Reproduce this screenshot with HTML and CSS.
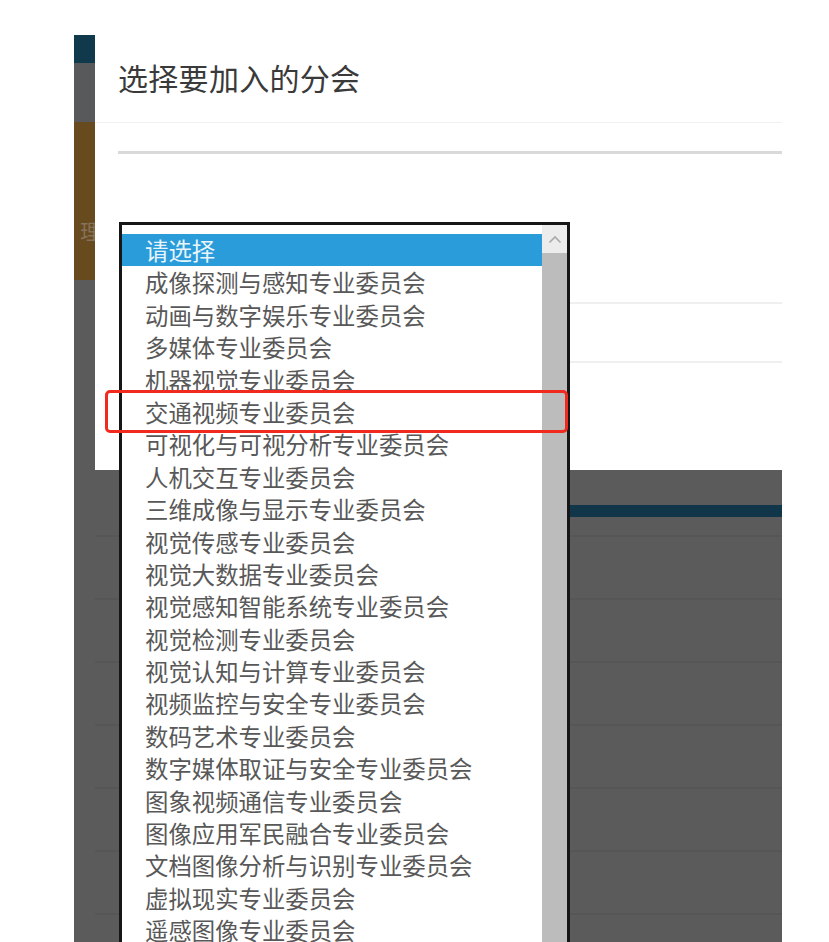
FILE: index.html
```html
<!DOCTYPE html>
<html lang="zh-CN">
<head>
<meta charset="utf-8">
<title>选择要加入的分会</title>
<link rel="stylesheet" href="styles.css">
</head>
<body>
<div class="screen">
 <div class="side">
  <div class="side_top"></div>
  <div class="side_gray"></div>
  <div class="side_brown"><span>理</span></div>
 </div>

 <div class="page">
  <div class="modal">
   <div class="modal_head"><h2>选择要加入的分会</h2></div>
   <div class="modal_body">
    <div class="rule"></div>
    <div class="field_line first"></div>
    <div class="field_line"></div>
   </div>
  </div>
  <div class="backdrop">
   <div class="bar"></div>
   <div class="rows">
    <div class="row"></div>
    <div class="row"></div>
    <div class="row"></div>
    <div class="row"></div>
    <div class="row"></div>
    <div class="row"></div>
    <div class="row"></div>
   </div>
  </div>
 </div>

 <!-- dropdown list, open over the dialog -->
 <div class="listbox">
  <ul class="options">
   <li class="selected">请选择</li>
   <li>成像探测与感知专业委员会</li>
   <li>动画与数字娱乐专业委员会</li>
   <li>多媒体专业委员会</li>
   <li>机器视觉专业委员会</li>
   <li>交通视频专业委员会</li>
   <li>可视化与可视分析专业委员会</li>
   <li>人机交互专业委员会</li>
   <li>三维成像与显示专业委员会</li>
   <li>视觉传感专业委员会</li>
   <li>视觉大数据专业委员会</li>
   <li>视觉感知智能系统专业委员会</li>
   <li>视觉检测专业委员会</li>
   <li>视觉认知与计算专业委员会</li>
   <li>视频监控与安全专业委员会</li>
   <li>数码艺术专业委员会</li>
   <li>数字媒体取证与安全专业委员会</li>
   <li>图象视频通信专业委员会</li>
   <li>图像应用军民融合专业委员会</li>
   <li>文档图像分析与识别专业委员会</li>
   <li>虚拟现实专业委员会</li>
   <li>遥感图像专业委员会</li>
  </ul>
  <div class="scrollbar">
   <div class="arrow"><svg width="14" height="9" viewBox="0 0 14 9"><path d="M1.5 7.5 L7 2 L12.5 7.5" fill="none" stroke="#a9a9a9" stroke-width="1.6"/></svg></div>
   <div class="thumb"></div>
  </div>
 </div>

 <div class="mark"></div>
</div>
</body>
</html>
```

FILE: styles.css
```css
body{
	margin: 0;
	background: #fff;
	font-family: "Noto Sans CJK SC", "Noto Sans", sans-serif;
}

.screen{
	position: relative;
	margin: 35px 0 0 74px;
	width: 708px;
	height: 907px;
	overflow: hidden;
	display: flex;
	background: #5b5b5c;
}

/* left strip of the page behind */
.side{
	width: 21px;
	flex: none;
}
.side_top{
	height: 28px;
	background: #10394c;
}
.side_gray{
	height: 59px;
	background: #58595b;
}
.side_brown{
	height: 158px;
	background: #684a1f;
	overflow: hidden;
	display: flex;
	align-items: flex-end;
	justify-content: flex-end;
}
.side_brown span{
	font-size: 21px;
	line-height: 24px;
	margin: 0 -6px 38px 0;
	color: #9a8d80;
	opacity: .6;
}

.page{
	flex: 1;
	display: flex;
	flex-direction: column;
}

/* dialog */
.modal{
	flex: none;
	height: 435px;
	background: #fff;
}
.modal_head{
	height: 87px;
	display: flex;
	align-items: center;
	padding-left: 23px;
	border-bottom: 1px solid #f1f1f1;
}
.modal_head h2{
	margin: -3px 0 0 0;
	font-size: 30px;
	font-weight: normal;
	color: #3a3a3a;
	letter-spacing: 0.3px;
}
.modal_body{
	padding: 28px 0 0 23px;
}
.rule{
	height: 3px;
	background: #d9d9d9;
}
.field_line{
	height: 2px;
	margin-left: 450px;
	background: #efefef;
}
.field_line.first{
	margin-top: 148px;
}
.field_line + .field_line{
	margin-top: 57px;
}

/* page behind the dialog */
.backdrop{
	flex: 1;
	min-height: 0;
}
.bar{
	margin: 35px 0 0 60px;
	height: 12px;
	background: #11364a;
}
.rows{
	padding-top: 18px;
}
.row{
	height: 61px;
	border-top: 2px solid #565657;
}

/* open select */
.listbox{
	position: absolute;
	left: 45px;
	top: 187px;
	width: 445px;
	height: 740px;
	border: 3px solid #161616;
	background: #fff;
	display: flex;
}
.options{
	flex: 1;
	margin: 0;
	padding: 9px 0 0 0;
	list-style: none;
}
.options li{
	height: 32.4px;
	line-height: 32.4px;
	padding-left: 23px;
	font-size: 23.4px;
	color: #585858;
	white-space: nowrap;
}
.options li.selected{
	background: #2a9cd9;
	color: #e9f5fc;
}
.scrollbar{
	width: 25px;
	flex: none;
	display: flex;
	flex-direction: column;
	background: #ececec;
}
.arrow{
	height: 28px;
	display: flex;
	align-items: center;
	justify-content: center;
}
.thumb{
	flex: 1;
	background: #bcbcbc;
}

/* red highlight */
.mark{
	position: absolute;
	left: 31px;
	top: 355px;
	width: 457px;
	height: 37px;
	border: 3px solid #f02a1f;
	border-radius: 5px;
}
```
